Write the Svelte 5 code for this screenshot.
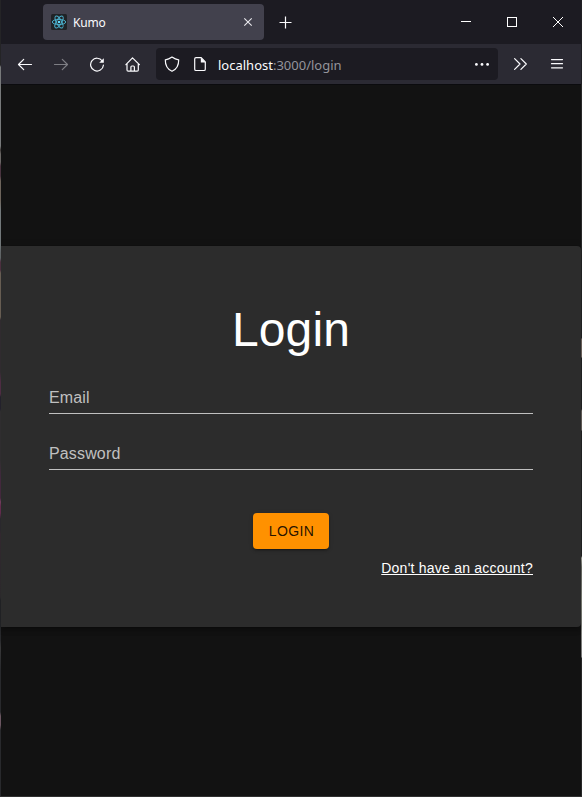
<script>
  let email = $state('');
  let password = $state('');
</script>

<div class="window">
  <header class="titlebar">
    <div class="tab">
      <svg class="favicon" width="16" height="16" viewBox="0 0 16 16">
        <rect width="16" height="16" rx="1.5" fill="#202326" />
        <g fill="none" stroke="#4bb3d0" stroke-width=".95">
          <ellipse cx="8" cy="8" rx="6.7" ry="2.6" />
          <ellipse cx="8" cy="8" rx="6.7" ry="2.6" transform="rotate(60 8 8)" />
          <ellipse cx="8" cy="8" rx="6.7" ry="2.6" transform="rotate(120 8 8)" />
        </g>
        <circle cx="8" cy="8" r="1.3" fill="#61dafb" />
      </svg>
      <span class="name">Kumo</span>
      <svg width="16" height="16" viewBox="0 0 16 16"><path d="M4.3 4.3l7.4 7.4M11.7 4.3l-7.4 7.4" stroke="#e9e9ee" stroke-width="1.1" /></svg>
    </div>
    <svg class="newtab" width="16" height="16" viewBox="0 0 16 16"><path d="M8.5 2.5v12M2.5 8.5h12" stroke="#fbfbfe" stroke-width="1.2" /></svg>
    <div class="controls">
      <svg width="46" height="44"><path d="M18 21.5h10" stroke="#fff" /></svg>
      <svg width="46" height="44"><rect x="18.5" y="17.5" width="9" height="9" fill="none" stroke="#fff" /></svg>
      <svg width="46" height="44"><path d="M18 17l10 10M28 17L18 27" stroke="#fff" /></svg>
    </div>
  </header>

  <nav class="toolbar">
    <div class="buttons">
      <svg viewBox="0 0 16 16"><path d="M14.5 8.5H1.7M6.7 3.3L1.5 8.5L6.7 13.7" /></svg>
      <svg class="dim" viewBox="0 0 16 16"><path d="M1.5 8.5h12.8M9.3 3.3l5.2 5.2L9.3 13.7" /></svg>
      <svg viewBox="0 0 16 16"><path d="M13.3 5A6.4 6.4 0 1 0 14.4 9.2" /><path d="M14.8 2.2v4.6H10.2z" fill="#fbfbfe" stroke="none" /></svg>
      <svg viewBox="0 0 16 16"><path d="M0.9 8.7L7.5 1.8l6.9 6.9M2 7.8V14q0 1.2 1.2 1.2h8.9q1.2 0 1.2-1.2V7.8M5.9 15v-4q0-1 1-1h1.5q1 0 1 1v4" /></svg>
    </div>
    <div class="address">
      <svg viewBox="0 0 16 16"><path d="M8 1C6 2.4 3.8 3.4 1.3 3.8C1.2 9.4 3.1 13.2 8 15.3C12.9 13.2 14.8 9.4 14.7 3.8C12.2 3.4 10 2.4 8 1z" /></svg>
      <svg viewBox="0 0 16 16"><path d="M9.2 1.7H4Q2.7 1.7 2.7 3v10.2q0 1.3 1.3 1.3h8q1.3 0 1.3-1.3V5.9z" /><path d="M8.8 1.5v5h5z" fill="#fbfbfe" stroke="none" /></svg>
      <span class="url">localhost<span>:3000/login</span></span>
      <svg class="dots" viewBox="0 0 16 16"><g fill="#fbfbfe" stroke="none"><circle cx="2.4" cy="8.4" r="1.4" /><circle cx="8" cy="8.4" r="1.4" /><circle cx="13.6" cy="8.4" r="1.4" /></g></svg>
    </div>
    <svg class="more" viewBox="0 0 16 16"><path d="M2.6 2.6L8 8l-5.4 5.4M8.9 2.6L14.3 8l-5.4 5.4" /></svg>
    <svg class="menu" viewBox="0 0 16 16"><path d="M2.5 3.6h11M2.5 7.7h11M2.5 11.8h11" /></svg>
  </nav>

  <main>
    <form class="card" onsubmit={(e) => e.preventDefault()}>
      <h1>Login</h1>
      <input type="text" placeholder="Email" bind:value={email} />
      <input type="password" placeholder="Password" bind:value={password} />
      <button type="submit">LOGIN</button>
      <a href="#register">Don't have an account?</a>
    </form>
  </main>
</div>

<style>
  :global(body) {
    margin: 0;
    background: #121212;
  }
  .window {
    box-sizing: border-box;
    width: 582px;
    height: 797px;
    padding: 0 1px 1px;
    display: flex;
    flex-direction: column;
    overflow: hidden;
    background:
      linear-gradient(#242426 0 65px, #77797a 67px 146px, #3f3a38 150px, #6a6765 154px 162px, #49333f 166px 176px, #6d645b 181px 200px, #72787a 210px 258px, #5b3a4d 262px 270px, #7b7063 273px 317px, #3b343a 320px 372px, #5e3551 382px 394px, #2b2935 397px 409px, #3a383a 412px 460px, #51304b 480px 498px, #8a4a70 502px, #75345d 506px 513px, #333036 519px 530px, #3d303a 534px, #343234 597px, #28292c 600px 640px, #383839 648px, #28292c 670px 712px, #6b5661 716px 725px, #28292c 730px) 0 0 / 1px 796px no-repeat,
      linear-gradient(#202024 0 84px, #272828 85px 338px, #7b7169 339px 357px, #272828 358px 409px, #716a65 411px 430px, #272828 431px 556px, #aeb0a5 558px, #74766f 567px, #8a8c83 600px, #777 657px, #272828 658px) 581px 0 / 1px 796px no-repeat,
      #303030;
  }
  .titlebar {
    height: 44px;
    flex: none;
    display: flex;
    background: #1c1b22;
  }
  .tab {
    box-sizing: border-box;
    width: 221px;
    height: 36px;
    margin: 4px 0 0 42px;
    padding: 0 8px;
    display: flex;
    align-items: center;
    border-radius: 4px;
    background: #42414d;
    color: #fbfbfe;
    font: 12px/16px "Noto Sans", "Open Sans", sans-serif;
  }
  .name {
    flex: 1;
    margin-left: 6px;
    padding-top: 2px;
    letter-spacing: -0.2px;
  }
  .newtab {
    margin: 14px 0 0 13px;
  }
  .controls {
    display: flex;
    margin-left: auto;
  }
  .toolbar {
    height: 40px;
    flex: none;
    display: flex;
    align-items: center;
    background: #2b2a33;
  }
  .toolbar svg {
    width: 16px;
    height: 16px;
    flex: none;
    fill: none;
    stroke: #fbfbfe;
    stroke-width: 1.2;
    stroke-linecap: round;
    stroke-linejoin: round;
  }
  .buttons {
    display: flex;
    gap: 20px;
    margin-left: 16px;
  }
  .buttons .dim {
    opacity: 0.4;
  }
  .address {
    box-sizing: border-box;
    width: 342px;
    height: 32px;
    margin-left: 15px;
    padding: 0 8px;
    display: flex;
    align-items: center;
    gap: 12px;
    border-radius: 4px;
    background: #1c1b22;
  }
  .url {
    flex: 1;
    margin-left: -2px;
    padding-top: 2px;
    color: #fbfbfe;
    font: 13px/18px "Noto Sans", "Open Sans", sans-serif;
  }
  .url span {
    color: #94949b;
  }
  .more {
    margin-left: 14px;
  }
  .menu {
    margin-left: 21px;
  }
  main {
    flex: 1;
    padding-top: 162px;
    background: #121212;
    border-top: 1px solid #0b0b0e;
    box-sizing: border-box;
  }
  .card {
    box-sizing: border-box;
    height: 381px;
    margin-top: -1px;
    padding: 48px;
    display: flex;
    flex-direction: column;
    border-radius: 0 4px 4px 0;
    background: #2c2c2c;
    box-shadow: 0 2px 4px -1px rgba(0, 0, 0, 0.2), 0 4px 5px rgba(0, 0, 0, 0.14), 0 1px 10px rgba(0, 0, 0, 0.12);
    font-family: "Liberation Sans", Arial, sans-serif;
  }
  h1 {
    margin: 8px 0 21px;
    color: #fff;
    font-size: 48px;
    font-weight: 400;
    line-height: 56px;
    letter-spacing: 0.1px;
    text-align: center;
  }
  input {
    box-sizing: border-box;
    height: 35px;
    margin: 0 0 21px;
    padding: 3px 0 0;
    border: 0;
    border-bottom: 1px solid #c0c0c0;
    border-radius: 0;
    outline: none;
    background: none;
    color: #fff;
    font: 16px/19px "Liberation Sans", Arial, sans-serif;
    letter-spacing: 0.15px;
  }
  input::placeholder {
    color: #c0c0c0;
    opacity: 1;
  }
  button {
    align-self: center;
    width: 76px;
    height: 36px;
    margin-top: 22px;
    padding: 0 0 0 1px;
    border: 0;
    border-radius: 4px;
    background: #ff9100;
    color: rgba(0, 0, 0, 0.87);
    box-shadow: 0 3px 1px -2px rgba(0, 0, 0, 0.2), 0 2px 2px rgba(0, 0, 0, 0.14), 0 1px 5px rgba(0, 0, 0, 0.12);
    font: 14px/24px "Liberation Sans", Arial, sans-serif;
    letter-spacing: 0.35px;
  }
  a {
    align-self: flex-end;
    margin-top: 9px;
    color: #fff;
    font-size: 14px;
    line-height: 20px;
    letter-spacing: 0.23px;
    text-decoration: underline;
  }
</style>
